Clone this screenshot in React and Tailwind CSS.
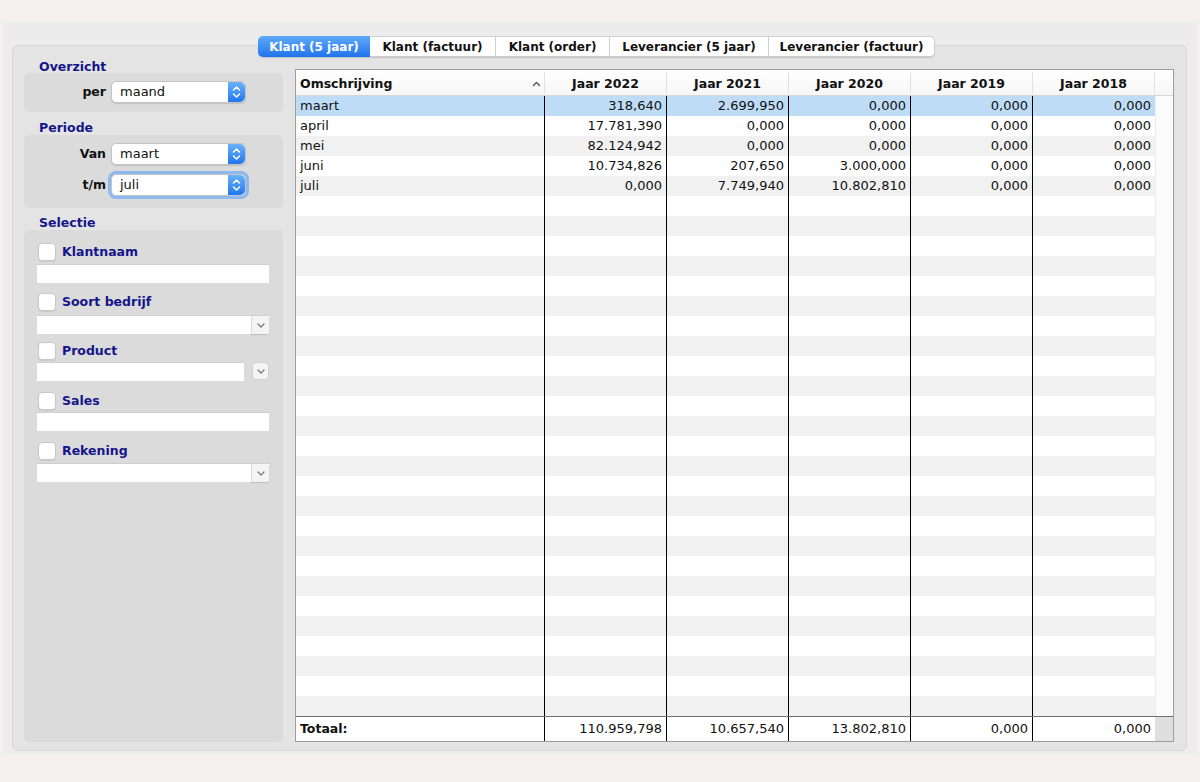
import React from 'react';

const FONT = { fontFamily: '"DejaVu Sans", "Liberation Sans", sans-serif' };

const rows = [
  ['maart', '318,640', '2.699,950', '0,000', '0,000', '0,000'],
  ['april', '17.781,390', '0,000', '0,000', '0,000', '0,000'],
  ['mei', '82.124,942', '0,000', '0,000', '0,000', '0,000'],
  ['juni', '10.734,826', '207,650', '3.000,000', '0,000', '0,000'],
  ['juli', '0,000', '7.749,940', '10.802,810', '0,000', '0,000'],
];
const totals = ['110.959,798', '10.657,540', '13.802,810', '0,000', '0,000'];
const years = ['Jaar 2022', 'Jaar 2021', 'Jaar 2020', 'Jaar 2019', 'Jaar 2018'];
const tabs = [
  { label: 'Klant (5 jaar)', w: 'w-[112px]', active: true },
  { label: 'Klant (factuur)', w: 'w-[126px]' },
  { label: 'Klant (order)', w: 'w-[114px]' },
  { label: 'Leverancier (5 jaar)', w: 'w-[159px]' },
  { label: 'Leverancier (factuur)', w: 'w-[166px]', last: true },
];

const GRID = 'grid grid-cols-[249px_122px_122px_122px_122px_122px_1fr]';

const Stepper = () => (
  <div className="w-[17px] h-full rounded-r-[5px] bg-gradient-to-b from-[#69b1fa] to-[#1f76ee] flex items-center justify-center">
    <svg width="9" height="14" viewBox="0 0 9 14" fill="none" stroke="white" strokeWidth="1.5" strokeLinecap="round" strokeLinejoin="round">
      <path d="M1.5 5 L4.5 2 L7.5 5" />
      <path d="M1.5 9 L4.5 12 L7.5 9" />
    </svg>
  </div>
);

const PopUp = ({ value, focused }) => (
  <div
    className={`w-[135px] h-[22px] flex bg-white rounded-[5px] border border-[#c4c4c4] shadow-[0_1px_1px_rgba(0,0,0,0.12)] ${
      focused ? 'ring-[3px] ring-[#8fb8ee]' : ''
    }`}
  >
    <span className="flex-1 pl-[8px] text-[13px] leading-[20px] text-[#111]">{value}</span>
    <Stepper />
  </div>
);

const Chevron = () => (
  <svg width="10" height="7" viewBox="0 0 10 7" fill="none" stroke="#7a7a7a" strokeWidth="1.3" strokeLinecap="round" strokeLinejoin="round">
    <path d="M2 2 L5 5 L8 2" />
  </svg>
);

const Check = ({ label }) => (
  <div className="flex items-center h-[18px]">
    <div className="w-[18px] h-[18px] ml-[14px] bg-white rounded-[4px] border border-[#c8c8c8] shadow-[0_1px_1px_rgba(0,0,0,0.08)]" />
    <span className="ml-[6px] text-[12.5px] font-bold text-[#15158a]">{label}</span>
  </div>
);

const Field = () => (
  <div className="ml-[13px] w-[232px] h-[19px] bg-white border-t border-[#cfcfcf]" />
);

const Combo = () => (
  <div className="ml-[13px] w-[232px] h-[19px] flex bg-white border-t border-[#cfcfcf]">
    <div className="flex-1" />
    <div className="w-[18px] h-full bg-[#f4f4f4] border-l border-[#dcdcdc] rounded-r-[3px] flex items-center justify-center shadow-[0_1px_1px_rgba(0,0,0,0.15)]">
      <Chevron />
    </div>
  </div>
);

const GroupLabel = ({ children, className }) => (
  <div className={`pl-[15px] h-[15px] text-[12.5px] leading-[15px] font-bold text-[#15158a] ${className || ''}`}>
    {children}
  </div>
);

const RowLabel = ({ children }) => (
  <span className="w-[82px] text-right text-[12.5px] leading-[22px] font-bold text-[#111]">{children}</span>
);

const LeftColumn = () => (
  <div className="w-[259px] h-[684px] mt-[12px] flex flex-col">
    <GroupLabel className="pt-[1px]">Overzicht</GroupLabel>
    <div className="h-[39px] bg-[#dbdbdb] rounded-[5px] pt-[8px] flex">
      <RowLabel>per</RowLabel>
      <div className="ml-[5px]">
        <PopUp value="maand" />
      </div>
    </div>
    <GroupLabel className="mt-[8px]">Periode</GroupLabel>
    <div className="h-[73px] bg-[#dbdbdb] rounded-[5px] pt-[8px] flex flex-col gap-[9px]">
      <div className="flex">
        <RowLabel>Van</RowLabel>
        <div className="ml-[5px]">
          <PopUp value="maart" />
        </div>
      </div>
      <div className="flex">
        <RowLabel>t/m</RowLabel>
        <div className="ml-[5px]">
          <PopUp value="juli" focused />
        </div>
      </div>
    </div>
    <GroupLabel className="mt-[7px]">Selectie</GroupLabel>
    <div className="flex-1 bg-[#dbdbdb] rounded-[5px] pt-[13px]">
      <Check label="Klantnaam" />
      <div className="mt-[3px]"><Field /></div>
      <div className="mt-[10px]"><Check label="Soort bedrijf" /></div>
      <div className="mt-[4px]"><Combo /></div>
      <div className="mt-[8px]"><Check label="Product" /></div>
      <div className="mt-[2px] flex items-start">
        <div className="ml-[13px] w-[207px] h-[19px] bg-white border-t border-[#cfcfcf]" />
        <div className="ml-[8px] w-[17px] h-[18px] bg-[#f4f4f4] rounded-[4px] border border-[#d0d0d0] flex items-center justify-center">
          <Chevron />
        </div>
      </div>
      <div className="mt-[11px]"><Check label="Sales" /></div>
      <div className="mt-[2px]"><Field /></div>
      <div className="mt-[11px]"><Check label="Rekening" /></div>
      <div className="mt-[3px]"><Combo /></div>
    </div>
  </div>
);

const DataTable = () => {
  const body = Array.from({ length: 31 }, (_, i) => rows[i] || null);
  return (
    <div className="flex-1 h-[673px] mt-[23px] bg-white border border-[#9d9d9d] flex flex-col text-[13px] text-[#111]">
      {/* header */}
      <div className={`${GRID} h-[26px] border-b border-[#d6d6d6] bg-gradient-to-b from-white to-[#f6f6f6] font-bold text-[12.5px]`}>
        <div className="flex items-center justify-between pl-[4px] pr-[3px] pt-[3px] border-r border-[#e0e0e0] my-[2px]">
          <span>Omschrijving</span>
          <svg width="9" height="6" viewBox="0 0 9 6" fill="none" stroke="#555" strokeWidth="1.4" strokeLinecap="round" strokeLinejoin="round">
            <path d="M1.5 4.5 L4.5 1.5 L7.5 4.5" />
          </svg>
        </div>
        {years.map((y) => (
          <div key={y} className="flex items-center justify-center pt-[3px] border-r border-[#e0e0e0] my-[2px]">
            {y}
          </div>
        ))}
        <div />
      </div>
      {/* body */}
      <div className="flex-1 overflow-hidden">
        {body.map((r, i) => {
          const bg = i === 0 ? 'bg-[#bfdcf7]' : i % 2 === 0 ? 'bg-[#f1f1f1]' : 'bg-white';
          return (
            <div key={i} className={`${GRID} h-[20px] leading-[20px]`}>
              <div className={`${bg} pl-[4px] border-r border-black`}>{r ? r[0] : ''}</div>
              {[1, 2, 3, 4, 5].map((c) => (
                <div key={c} className={`${bg} text-right pr-[4px] ${c < 5 ? 'border-r border-black' : ''}`}>
                  {r ? r[c] : ''}
                </div>
              ))}
              <div className="bg-[#fbfbfb] border-l border-[#ececec]" />
            </div>
          );
        })}
      </div>
      {/* totals */}
      <div className={`${GRID} h-[25px] leading-[24px] border-t border-[#6f6f6f]`}>
        <div className="pl-[4px] font-bold text-[12.5px] border-r border-black">Totaal:</div>
        {totals.map((t, c) => (
          <div key={c} className={`text-right pr-[4px] ${c < 4 ? 'border-r border-black' : ''}`}>
            {t}
          </div>
        ))}
        <div className="bg-[#dfdfdf]" />
      </div>
    </div>
  );
};

export default function App() {
  return (
    <div className="w-[1200px] h-[782px] bg-[#f4f0f0] pt-[22px] overflow-hidden" style={FONT}>
      <div className="ml-[3px] w-[1194px] h-[732px] bg-[#ececec] pt-[14px] pl-[9px] pr-[10px]">
        <div className="relative z-10 flex justify-center pr-[6px]">
          <div className="flex h-[21px] rounded-[5px] shadow-[0_1px_1px_rgba(0,0,0,0.15)]">
            {tabs.map((t) => (
              <div
                key={t.label}
                className={`${t.w} flex items-center justify-center text-[12px] font-bold ${
                  t.active
                    ? 'bg-gradient-to-b from-[#5ea9f9] to-[#1f74ec] text-white rounded-l-[5px]'
                    : 'bg-white text-[#111] border-y border-r border-[#cfcfcf]'
                } ${t.last ? 'rounded-r-[5px]' : ''}`}
              >
                {t.label}
              </div>
            ))}
          </div>
        </div>
        <div className="mt-[-12px] h-[706px] bg-[#e4e4e4] border border-[#d6d6d6] rounded-[6px] pl-[11px] pr-[12px] flex gap-[12px] items-start">
          <LeftColumn />
          <DataTable />
        </div>
      </div>
    </div>
  );
}
